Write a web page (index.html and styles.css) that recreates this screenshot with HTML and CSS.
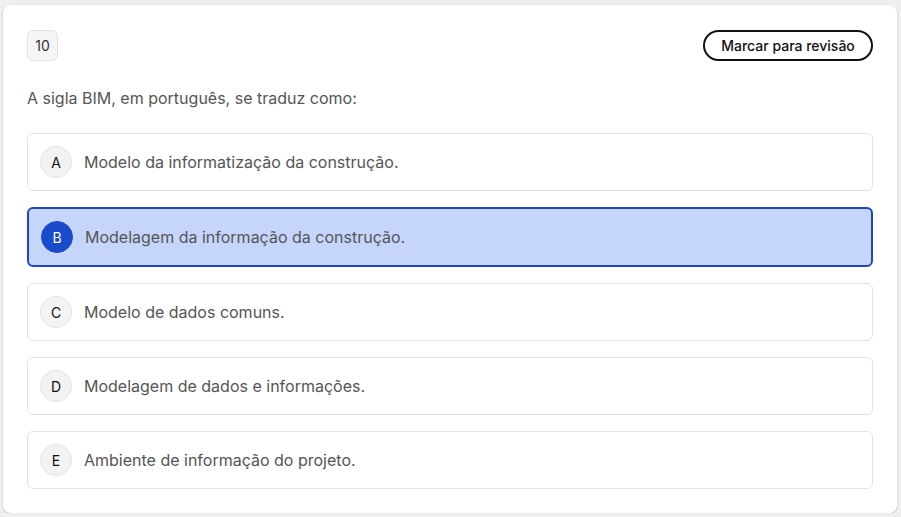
FILE: index.html
```html
<!DOCTYPE html>
<html lang="pt">
<head>
<meta charset="utf-8">
<link rel="stylesheet" href="styles.css">
</head>
<body>
<div class="card">
  <div class="header">
    <span class="badge">10</span>
    <button class="review">Marcar para revisão</button>
  </div>
  <p class="question">A sigla BIM, em português, se traduz como:</p>
  <div class="options">
    <div class="option"><span class="letter">A</span><span class="text">Modelo da informatização da construção.</span></div>
    <div class="option selected"><span class="letter">B</span><span class="text">Modelagem da informação da construção.</span></div>
    <div class="option"><span class="letter">C</span><span class="text">Modelo de dados comuns.</span></div>
    <div class="option"><span class="letter">D</span><span class="text">Modelagem de dados e informações.</span></div>
    <div class="option"><span class="letter">E</span><span class="text">Ambiente de informação do projeto.</span></div>
  </div>
</div>
</body>
</html>
```
FILE: styles.css
```css
html, body {
  margin: 0;
  background: #efefef;
}
body {
  padding: 5px 4px 0 3px;
  font-family: Inter, "Noto Sans", sans-serif;
}
.card {
  width: 894px;
  height: 508px;
  box-sizing: border-box;
  background: #fff;
  border-radius: 8px;
  box-shadow: 0 1px 3px rgba(0,0,0,0.12), 0 1px 2px rgba(0,0,0,0.08);
  padding: 25px 24px 24px 24px;
}
.header {
  display: flex;
  justify-content: space-between;
  align-items: center;
  height: 31px;
}
.badge {
  width: 31px;
  height: 31px;
  box-sizing: border-box;
  display: flex;
  align-items: center;
  justify-content: center;
  border: 1px solid #e3e3e3;
  background: #f5f5f5;
  border-radius: 6px;
  font-size: 14px;
  color: #333;
}
.review {
  height: 31px;
  width: 170px;
  box-sizing: border-box;
  padding: 0 16px;
  border: 2px solid #111;
  border-radius: 16px;
  background: #fff;
  font-family: Inter, sans-serif;
  font-size: 14px;
  font-weight: 500;
  color: #111;
}
.question {
  margin: 25px 0 23px;
  font-size: 16px;
  line-height: 24px;
  color: #555;
}
.options {
  display: flex;
  flex-direction: column;
  gap: 16px;
}
.option {
  display: flex;
  align-items: center;
  gap: 12px;
  height: 58px;
  box-sizing: border-box;
  border: 1px solid #e2e2e2;
  border-radius: 6px;
  padding: 0 12px;
  background: #fff;
}
.letter {
  width: 32px;
  height: 32px;
  box-sizing: border-box;
  border-radius: 50%;
  border: 1px solid #e2e2e2;
  background: #f3f3f3;
  display: flex;
  align-items: center;
  justify-content: center;
  font-size: 14px;
  color: #111;
  flex-shrink: 0;
}
.text {
  font-size: 16px;
  color: #555;
}
.option.selected {
  height: 60px;
  border: 2px solid #1a47c8;
  background: #c5d5fb;
}
.option.selected .letter {
  background: #1a4bcc;
  border-color: #1a4bcc;
  color: #fff;
}
```
